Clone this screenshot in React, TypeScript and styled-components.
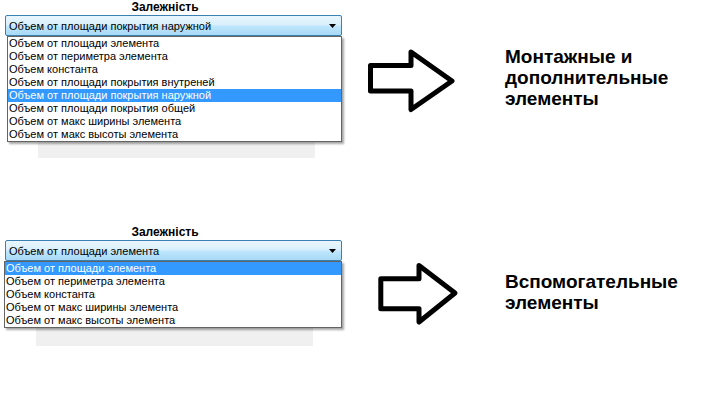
import React from 'react';
import styled, { createGlobalStyle } from 'styled-components';

const GlobalStyle = createGlobalStyle`
  body {
    margin: 0;
    background: #fff;
    font-family: "Liberation Sans", Arial, sans-serif;
  }
`;

type ArrowShape = {
  width: number;
  height: number;
  points: string;
  left: number;
  top: number;
};

type Section = {
  selected: string;
  options: string[];
  listShift: number;
  panelIndent: number;
  panelWidth: number;
  panelHeight: number;
  arrow: ArrowShape;
  caption: string[];
  captionTop: number;
  rowHeight: number;
};

const sections: Section[] = [
  {
    selected: 'Объем от площади покрытия наружной',
    options: [
      'Объем от площади элемента',
      'Объем от периметра элемента',
      'Объем константа',
      'Объем от площади покрытия внутреней',
      'Объем от площади покрытия наружной',
      'Объем от площади покрытия общей',
      'Объем от макс ширины элемента',
      'Объем от макс высоты элемента',
    ],
    listShift: 2,
    panelIndent: 38,
    panelWidth: 277,
    panelHeight: 122,
    arrow: {
      width: 92,
      height: 66,
      left: 16,
      top: 48,
      points: '4.5,17.5 45,17.5 45,4 86,33 45,61.5 45,43 4.5,43',
    },
    caption: ['Монтажные и', 'дополнительные', 'элементы'],
    captionTop: 46,
    rowHeight: 225,
  },
  {
    selected: 'Объем от площади элемента',
    options: [
      'Объем от площади элемента',
      'Объем от периметра элемента',
      'Объем константа',
      'Объем от макс ширины элемента',
      'Объем от макс высоты элемента',
    ],
    listShift: -1,
    panelIndent: 36,
    panelWidth: 277,
    panelHeight: 85,
    arrow: {
      width: 86,
      height: 66,
      left: 26,
      top: 36,
      points: '4.8,17.8 43,17.8 43,4.5 79,32 43,61 43,47.8 4.8,47.8',
    },
    caption: ['Вспомогательные', 'элементы'],
    captionTop: 46,
    rowHeight: 180,
  },
];

const App: React.FC = () => {
  return (
    <Page>
      <GlobalStyle />
      {sections.map((s, i) => (
        <Row key={i} $height={s.rowHeight}>
          <Field>
            <Title>Залежність</Title>
            <SelectWrap>
              <SelectBox>
                <SelectText>{s.selected}</SelectText>
                <Caret viewBox="0 0 7 4" width="7" height="4">
                  <polygon points="0,0 7,0 3.5,4" fill="#000" />
                </Caret>
              </SelectBox>
              <Dropdown $shift={s.listShift}>
                {s.options.map((o) => (
                  <Option key={o} $active={o === s.selected}>
                    {o}
                  </Option>
                ))}
              </Dropdown>
            </SelectWrap>
            <Panel $indent={s.panelIndent} $width={s.panelWidth} $height={s.panelHeight} />
          </Field>
          <Aside>
            <ArrowCell>
              <ArrowIcon
                width={s.arrow.width}
                height={s.arrow.height}
                viewBox={`0 0 ${s.arrow.width} ${s.arrow.height}`}
                $left={s.arrow.left}
                $top={s.arrow.top}
              >
                <polygon
                  points={s.arrow.points}
                  fill="none"
                  stroke="#000"
                  strokeWidth="5"
                  strokeLinejoin="round"
                />
              </ArrowIcon>
            </ArrowCell>
            <Caption $top={s.captionTop}>
              {s.caption.map((line) => (
                <div key={line}>{line}</div>
              ))}
            </Caption>
          </Aside>
        </Row>
      ))}
    </Page>
  );
};

const Page = styled.div`
  width: 727px;
  height: 405px;
  overflow: hidden;
`;

const Row = styled.div<{ $height: number }>`
  display: flex;
  height: ${(p) => p.$height}px;
`;

const Field = styled.div`
  width: 350px;
  flex-shrink: 0;
`;

const Title = styled.div`
  width: 330px;
  text-align: center;
  font-weight: bold;
  font-size: 12px;
  line-height: 14px;
  color: #000;
`;

const SelectWrap = styled.div`
  position: relative;
  margin: 1px 0 0 5px;
  width: 337px;
`;

const SelectBox = styled.div`
  box-sizing: border-box;
  height: 21px;
  border: 1px solid #3c7fb1;
  border-radius: 2px;
  background: linear-gradient(#eaf6fd 0%, #d9f0fc 45%, #bee6fd 55%, #a7d9f5 100%);
  display: flex;
  align-items: center;
  justify-content: space-between;
  padding: 0 5px 0 3px;
`;

const SelectText = styled.span`
  font-size: 11px;
  color: #000;
`;

const Caret = styled.svg`
  display: block;
`;

const Dropdown = styled.div<{ $shift: number }>`
  position: absolute;
  top: 100%;
  left: ${(p) => p.$shift}px;
  right: 0;
  background: #fff;
  border: 1px solid #646464;
  box-shadow: 2px 2px 2px rgba(0, 0, 0, 0.35);
  z-index: 1;
`;

const Option = styled.div<{ $active: boolean }>`
  height: 13px;
  line-height: 13px;
  padding-left: 1px;
  font-size: 11px;
  white-space: nowrap;
  color: ${(p) => (p.$active ? '#fff' : '#000')};
  background: ${(p) => (p.$active ? '#3399ff' : 'transparent')};
`;

const Panel = styled.div<{ $indent: number; $width: number; $height: number }>`
  margin-left: ${(p) => p.$indent}px;
  width: ${(p) => p.$width}px;
  height: ${(p) => p.$height}px;
  background: #f0f0f0;
`;

const Aside = styled.div`
  flex: 1;
  display: grid;
  grid-template-columns: 155px auto;
  align-items: start;
`;

const ArrowCell = styled.div``;

const ArrowIcon = styled.svg<{ $left: number; $top: number }>`
  display: block;
  margin-left: ${(p) => p.$left}px;
  margin-top: ${(p) => p.$top}px;
`;

const Caption = styled.div<{ $top: number }>`
  margin-top: ${(p) => p.$top}px;
  font-weight: bold;
  font-size: 19px;
  line-height: 21px;
  color: #000;
`;

export default App;
